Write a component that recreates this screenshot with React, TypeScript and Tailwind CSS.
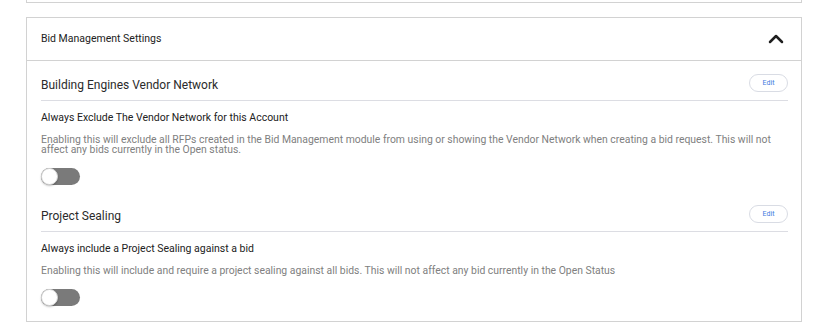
import { ChevronUp } from "lucide-react";

interface SettingProps {
  title: string;
  label: string;
  description: string;
}

function Toggle() {
  return (
    <div className="relative w-[39px] h-[17px] rounded-full bg-[#7a7a7a]">
      <div className="absolute left-0 top-0 w-[17px] h-[17px] rounded-full bg-white border border-[#d6d6d6] shadow-[0_1px_2px_rgba(0,0,0,0.25)]" />
    </div>
  );
}

function SettingSection({ title, label, description }: SettingProps) {
  return (
    <div>
      <div className="flex justify-between border-b border-[#dcdde3] pb-[8px]">
        <span className="self-end text-[12px] leading-[14px] text-[#2b2b2b]">{title}</span>
        <button className="w-[39px] h-[18px] rounded-full border border-[#d9dce4] bg-white text-[7px] text-[#3f7be0] flex items-center justify-center">
          Edit
        </button>
      </div>
      <div className="mt-[10px] text-[10.5px] leading-[14px] text-[#222]">{label}</div>
      <p className="mt-[10px] text-[10.4px] leading-[10px] text-[#808080]">{description}</p>
      <div className="mt-[13px]">
        <Toggle />
      </div>
    </div>
  );
}

export default function App() {
  return (
    <div className="w-[819px] h-[331px] bg-white font-['Roboto',sans-serif]">
      <div className="ml-[26px] w-[776px] h-[3px] border-x border-b border-[#d2d2d2]" />
      <div className="ml-[26px] mt-[14px] w-[776px] border border-[#d2d2d2]">
        <div className="h-[43px] flex items-center justify-between pl-[14px] pr-[14px] border-b border-[#d2d2d2]">
          <span className="text-[10.5px] text-[#222]">Bid Management Settings</span>
          <ChevronUp size={24} strokeWidth={2.5} className="text-[#1f1f1f] mr-[-1px]" />
        </div>
        <div className="pl-[14px] pr-[13px] pt-[13px] pb-[15px] flex flex-col gap-[20px]">
          <SettingSection
            title="Building Engines Vendor Network"
            label="Always Exclude The Vendor Network for this Account"
            description="Enabling this will exclude all RFPs created in the Bid Management module from using or showing the Vendor Network when creating a bid request. This will not affect any bids currently in the Open status."
          />
          <SettingSection
            title="Project Sealing"
            label="Always include a Project Sealing against a bid"
            description="Enabling this will include and require a project sealing against all bids. This will not affect any bid currently in the Open Status"
          />
        </div>
      </div>
    </div>
  );
}
